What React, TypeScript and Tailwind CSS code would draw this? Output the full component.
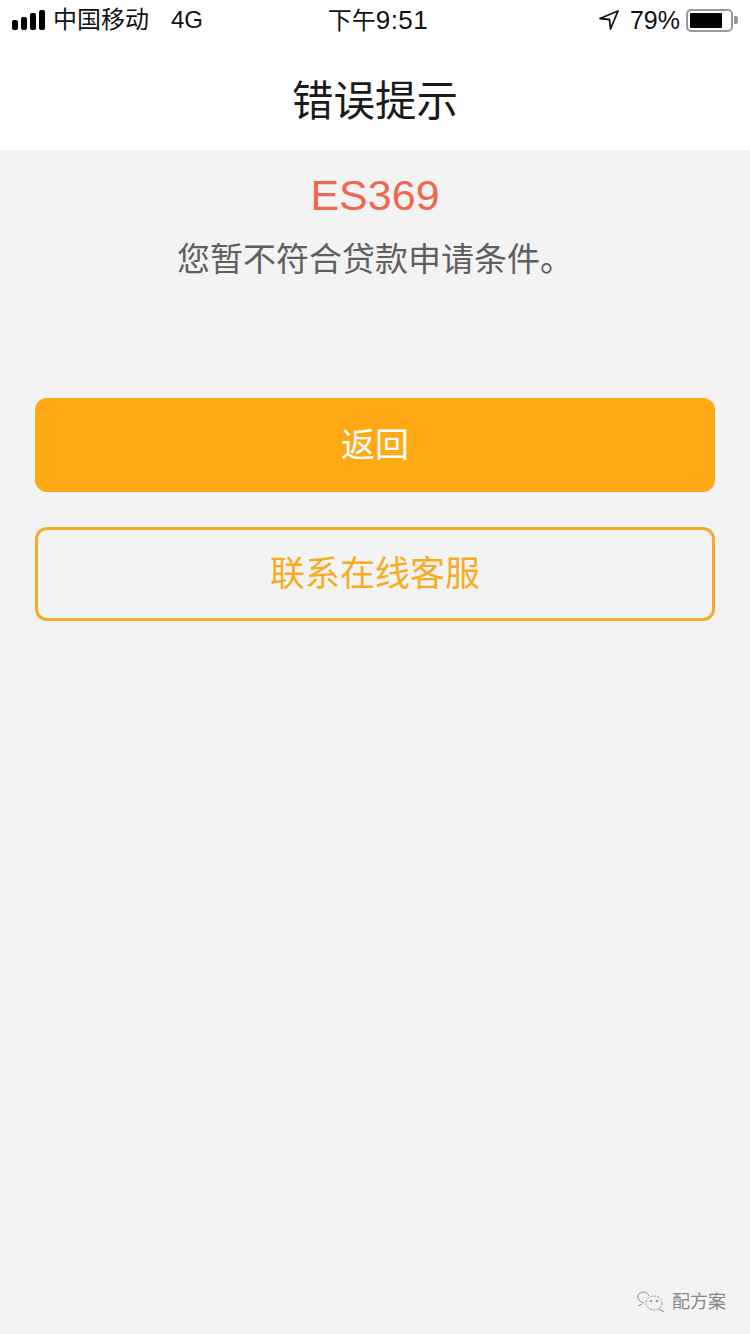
const cjk = "font-['Liberation_Sans','Noto_Sans_CJK_SC',sans-serif]";

function StatusBar() {
  return (
    <div className={`flex h-10 items-center justify-between pl-3 pr-3 text-[#111] ${cjk}`}>
      <div className="flex w-[263px] items-center">
        <div className="flex h-[20px] items-end gap-[3px]">
          <span className="h-[10px] w-[6px] rounded-[2px] bg-black" />
          <span className="h-[13px] w-[6px] rounded-[2px] bg-black" />
          <span className="h-[17px] w-[6px] rounded-[2px] bg-black" />
          <span className="h-[20px] w-[6px] rounded-[2px] bg-black" />
        </div>
        <span className="ml-[8px] text-[24px] leading-none">中国移动</span>
        <span className="ml-[22px] text-[24px] leading-none">4G</span>
      </div>
      <div className="flex items-baseline text-[24px] leading-none text-[#111]">
        <span>下午</span>
        <span className="text-[26px] tracking-[0.5px]">9:51</span>
      </div>
      <div className="flex w-[257px] items-center justify-end">
        <svg width="20" height="20" viewBox="0 0 20 20" fill="none" stroke="#111" strokeWidth="1.8" strokeLinejoin="round">
          <path d="M1 8.5 L19 1 L11.5 19 L10.5 9.5 Z" />
        </svg>
        <span className="ml-[11px] text-[25px] leading-none">79%</span>
        <div className="ml-[6px] flex h-[23px] w-[47px] items-center rounded-[5px] border-2 border-[#999] p-[2px]">
          <div className="h-full w-[32px] rounded-[1px] bg-black" />
        </div>
        <div className="ml-[1px] h-[8px] w-[4px] rounded-r-[2px] bg-[#999]" />
      </div>
    </div>
  );
}

function WeChatMark() {
  return (
    <svg width="28" height="22" viewBox="0 0 28 22" fill="none" stroke="#888" strokeWidth="1">
      <path d="M7 1 C3 1 0 4 1 7 C2 10 4 11 7 12 M7 1 C9 1 11 3 12 5" />
      <ellipse cx="17" cy="12" rx="8" ry="7" strokeDasharray="2 1.5" />
      <circle cx="14" cy="10" r="0.8" fill="#888" />
      <circle cx="20" cy="10" r="0.8" fill="#888" />
      <path d="M1 15 L5 13 M22 18 L27 21" />
    </svg>
  );
}

export default function App() {
  return (
    <div className={`relative flex h-[1334px] w-[750px] flex-col overflow-hidden bg-[#f3f3f4] ${cjk}`}>
      <div className="bg-white">
        <StatusBar />
        <div className="flex h-[110px] items-center justify-center pt-[13px] text-[41.5px] leading-none text-[#1a1a1a]">
          错误提示
        </div>
      </div>
      <div className="flex flex-col items-center pt-[22px]">
        <div className="text-[43px] leading-[46px] text-[#f0674f]">ES369</div>
        <div className="mt-[22px] text-[33px] leading-[40px] text-[#5f5f5f]">您暂不符合贷款申请条件。</div>
      </div>
      <div className="mt-[118px] flex flex-col gap-[35px] px-[35px]">
        <div className="flex h-[94px] items-center justify-center rounded-[12px] bg-[#ffa914] text-[34px] text-white">
          返回
        </div>
        <div className="flex h-[94px] items-center justify-center rounded-[12px] border-[3px] border-[#f5aa2b] text-[35px] text-[#f9ab1e]">
          联系在线客服
        </div>
      </div>
      <div className="absolute right-[24px] bottom-[21px] flex items-center gap-[7px]">
        <WeChatMark />
        <span className="text-[18px] leading-none text-[#888]">配方案</span>
      </div>
    </div>
  );
}
